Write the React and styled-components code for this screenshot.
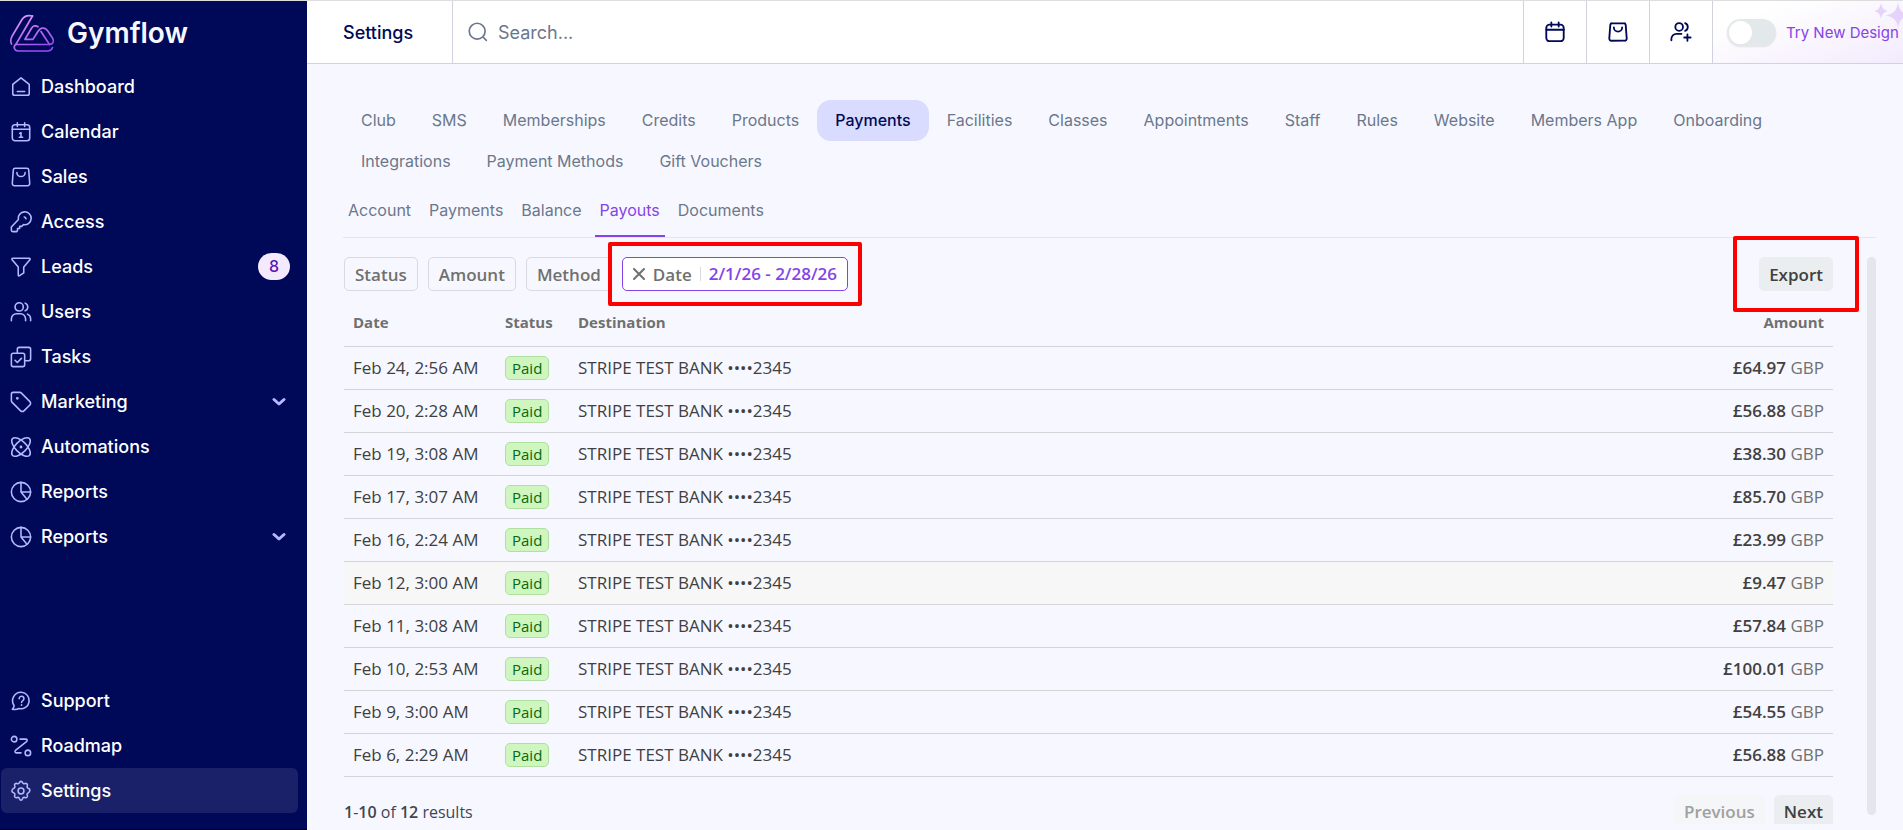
import React from 'react'
import styled, {createGlobalStyle, css} from 'styled-components'

const navItems = [
  {label: 'Dashboard', icon: 'home'},
  {label: 'Calendar', icon: 'calendarDay'},
  {label: 'Sales', icon: 'bag'},
  {label: 'Access', icon: 'key'},
  {label: 'Leads', icon: 'funnel', count: 8},
  {label: 'Users', icon: 'users'},
  {label: 'Tasks', icon: 'tasks'},
  {label: 'Marketing', icon: 'tag', expandable: true},
  {label: 'Automations', icon: 'atom'},
  {label: 'Reports', icon: 'pie'},
  {label: 'Reports', icon: 'pie', expandable: true},
]

const footerItems = [
  {label: 'Support', icon: 'help'},
  {label: 'Roadmap', icon: 'route'},
  {label: 'Settings', icon: 'gear', active: true},
]

const tabs = [
  'Club', 'SMS', 'Memberships', 'Credits', 'Products', 'Payments', 'Facilities', 'Classes', 'Appointments',
  'Staff', 'Rules', 'Website', 'Members App', 'Onboarding', 'Integrations', 'Payment Methods', 'Gift Vouchers',
]

const subTabs = ['Account', 'Payments', 'Balance', 'Payouts', 'Documents']

const payouts = [
  {date: 'Feb 24, 2:56 AM', amount: '£64.97'},
  {date: 'Feb 20, 2:28 AM', amount: '£56.88'},
  {date: 'Feb 19, 3:08 AM', amount: '£38.30'},
  {date: 'Feb 17, 3:07 AM', amount: '£85.70'},
  {date: 'Feb 16, 2:24 AM', amount: '£23.99'},
  {date: 'Feb 12, 3:00 AM', amount: '£9.47', hovered: true},
  {date: 'Feb 11, 3:08 AM', amount: '£57.84'},
  {date: 'Feb 10, 2:53 AM', amount: '£100.01'},
  {date: 'Feb 9, 3:00 AM', amount: '£54.55'},
  {date: 'Feb 6, 2:29 AM', amount: '£56.88'},
]

const icons = {
  home: <><path d="M3 9.2 12 2l9 7.2V19a2 2 0 0 1-2 2H5a2 2 0 0 1-2-2z"/><path d="M8 17h8"/></>,
  calendarDay: <><rect x="2.5" y="4" width="19" height="17.5" rx="3"/><path d="M2.5 9h19M8 2v4M16 2v4M10.5 13.5 12 12.7v5M10.2 17.8h3.6"/></>,
  calendar: <><rect x="2.5" y="4" width="19" height="18" rx="3.5"/><path d="M2.5 9.5h19M8 1.5V6M16 1.5V6"/></>,
  bag: <><path d="M5.6 2.5h12.8a2 2 0 0 1 2 1.8L21.5 19a2.3 2.3 0 0 1-2.3 2.5H4.8A2.3 2.3 0 0 1 2.5 19L3.6 4.3a2 2 0 0 1 2-1.8z"/><path d="M7.5 7a4.5 4.5 0 0 0 9 0"/></>,
  key: <><path d="M9.2 9.2a7 7 0 1 1 5.6 5.6l-2 2h-2.3v2.3H8.200v2.300l-1 1.100H3a1.500 1.500 0 0 1-1.500-1.500v-3.500z"/><path d="M15.500 6.500a2.500 2.500 0 0 1 2 2"/></>,
  funnel: <path d="M3 2.500h18c.9 0 1.200 1 .7 1.700L15 12v6.500l-4.500 3c-.8.500-1.500 0-1.500-.8V12L2.300 4.200C1.800 3.500 2.100 2.500 3 2.500z"/>,
  users: <><circle cx="10" cy="6.500" r="4.500"/><path d="M1.500 21.500v-2a5.500 5.500 0 0 1 5.500-5.500h4.500a5.500 5.500 0 0 1 5.500 5.500v2M16.500 2.300a4.500 4.500 0 0 1 0 8.400M19 14.300a5.500 5.500 0 0 1 3.500 5.200v2"/></>,
  userPlus: <><circle cx="10" cy="6.500" r="4.200"/><path d="M1.500 21v-1.500A5.500 5.500 0 0 1 7 14h5.500M16.500 2.300a4.500 4.500 0 0 1 0 8.400M19 14.500v7M15.500 18h7"/></>,
  tasks: <><rect x="1.500" y="8" width="14.500" height="14.500" rx="2"/><path d="M8 8V3.500a2 2 0 0 1 2-2h10.500a2 2 0 0 1 2 2V14a2 2 0 0 1-2 2H16M5.500 15.500l2.500 2.500 4.500-4.500"/></>,
  tag: <><path d="M1.500 3.500v7.200c0 .6.200 1 .6 1.400l9.500 9.600a2.500 2.500 0 0 0 3.600 0l6.500-6.500a2.500 2.500 0 0 0 0-3.600L12.200 2.100a2 2 0 0 0-1.400-.6H3.500a2 2 0 0 0-2 2z"/><circle cx="8" cy="8" r=".7"/></>,
  atom: <><ellipse cx="12" cy="12" rx="13" ry="6" transform="rotate(45 12 12)"/><ellipse cx="12" cy="12" rx="13" ry="6" transform="rotate(-45 12 12)"/><circle cx="12" cy="12" r=".7"/></>,
  pie: <><circle cx="12" cy="12" r="10.500"/><path d="M12 1.500V12h10.500M12 12l6.500 8"/></>,
  help: <><path d="M12.500 2.500a9 9 0 1 1-2.800 17.700C7.500 21.500 5 21.500 2.500 21c1-1 1.800-2.500 2-4A9.200 9.200 0 0 1 12.500 2.500z"/><path d="M10 9.500a2.600 2.600 0 1 1 4 2.100c-.9.600-1.400 1-1.400 1.900M12.600 16v.5"/></>,
  route: <><circle cx="4.500" cy="4.500" r="3"/><circle cx="19.500" cy="19.500" r="3"/><path d="M11 4.500h6c1.800 0 2.300 1.700 1 2.800L6.300 16.500c-1.500 1.200-1 3 .7 3h5"/></>,
  gear: <><path d="M12 1.500c1 0 1.500.6 1.800 1.400.3 1 1.300 1.400 2.300 1 .8-.4 1.700-.3 2.400.3.600.7.700 1.600.3 2.400-.4 1 0 2 1 2.300.8.300 1.900.8 1.900 2.100s-1.100 2.800-1.900 3.100c-1 .3-1.400 1.300-1 2.300.4.800.3 1.700-.3 2.400-.7.600-1.600.7-2.400.3-1-.4-2 0-2.300 1-.3.800-.8 1.900-1.800 1.900s-1.500-1.100-1.800-1.900c-.3-1-1.300-1.400-2.300-1-.8.400-1.700.3-2.400-.3-.6-.7-.7-1.600-.3-2.400.4-1 0-2-1-2.300-.8-.3-2.200-1.100-2.200-2.100s1.400-2.800 2.200-3.100c1-.3 1.400-1.300 1-2.300-.4-.8-.3-1.700.3-2.400.7-.6 1.600-.7 2.400-.3 1 .4 2 0 2.300-1 .3-.8.800-1.400 1.800-1.400z"/><circle cx="12" cy="12" r="3.200"/></>,
  search: <><circle cx="11" cy="11" r="9.500"/><path d="m18 18 4 4"/></>,
}

const Icon = ({name, size = 22, weight = 1.7}) => (
  <Svg width={size} height={size} viewBox="0 0 24 24" strokeWidth={weight} aria-hidden="true">{icons[name]}</Svg>
)

const Logo = () => (
  <Svg width="46" height="40" viewBox="0 0 46 40" stroke="url(#logoFill)" strokeWidth="1.7" aria-hidden="true">
    <defs>
      <linearGradient id="logoFill" gradientUnits="userSpaceOnUse" x1="12" y1="0" x2="28" y2="36">
        <stop offset="0" stopColor="#e59af8"/>
        <stop offset="1" stopColor="#9a4df2"/>
      </linearGradient>
    </defs>
    <path d="M2.500 31C1.300 28.500 1.500 26 3 23.300L13 6.500C15.500 2.500 18.500 1.800 23.500 3"/>
    <path d="M23.500 3 6.800 31.500H40c4 0 5.500-3 3.500-6.500L38.800 18c-2.800-4-7-4-9.500 0L24 26.300h-8l6.500-11c1.500-2.800 4.500-3 6.500-1.500"/>
    <path d="m32 18.500 8.500 13"/>
    <path d="M6.800 31.500c-3 2-1.500 6.500 2.500 6.500H38c3 0 4.800-1.200 5.500-3.500"/>
  </Svg>
)

const NavEntry = ({label, icon, count, expandable, active}) => (
  <NavLink href="#" $active={active}>
    <Icon name={icon}/>
    <span>{label}</span>
    {count && <Count>{count}</Count>}
    {expandable && (
      <Chevron width="14" height="10" viewBox="0 0 14 10" strokeWidth="3" aria-hidden="true"><path d="m2 2.500 5 4.500 5-4.500"/></Chevron>
    )}
  </NavLink>
)

const App = () => (
  <Page>
    <GlobalStyle/>
    <Sidebar>
      <Brand href="#"><Logo/>Gymflow</Brand>
      {navItems.map((item, i) => <NavEntry key={i} {...item}/>)}
      <Spacer/>
      {footerItems.map(item => <NavEntry key={item.label} {...item}/>)}
    </Sidebar>
    <Main>
      <Header>
        <Title>Settings</Title>
        <Search>
          <Icon name="search" size={20} weight={2}/>
          <SearchInput type="text" placeholder="Search..." aria-label="Search"/>
        </Search>
        <HeaderButton aria-label="Calendar"><Icon name="calendar" weight={2}/></HeaderButton>
        <HeaderButton aria-label="Sales"><Icon name="bag" weight={2}/></HeaderButton>
        <HeaderButton aria-label="Add user"><Icon name="userPlus" weight={2}/></HeaderButton>
        <DesignSwitch>
          <Switch type="checkbox" role="switch"/>
          Try New Design
          <Sparkles width="32" height="28" viewBox="0 0 32 28" aria-hidden="true">
            <path d="M10 2q1 7 7 8-6 1-7 8-1-7-7-8 6-1 7-8zM27 1q1 12 13 13.500Q28 16 27 27q-1-11-13-12.500Q26 13 27 1z"/>
          </Sparkles>
        </DesignSwitch>
      </Header>
      <Content>
        <Tabs>
          {tabs.map(tab => <Tab key={tab} href="#" $active={tab === 'Payments'}>{tab}</Tab>)}
        </Tabs>
        <SubTabs>
          {subTabs.map(tab => <SubTab key={tab} href="#" $active={tab === 'Payouts'}>{tab}</SubTab>)}
        </SubTabs>
        <Scroller>
          <Panel>
            <Toolbar>
              <Filter>Status</Filter>
              <Filter>Amount</Filter>
              <Filter>Method</Filter>
              <Marked>
                <Filter $applied>
                  <Svg width="12" height="12" viewBox="0 0 12 12" strokeWidth="2" aria-hidden="true"><path d="m1 1 10 10M11 1 1 11"/></Svg>
                  Date
                  <FilterValue>2/1/26 - 2/28/26</FilterValue>
                </Filter>
                <Highlight $x={14} $y={15}/>
              </Marked>
              <Spacer/>
              <Marked>
                <Button>Export</Button>
                <Highlight $x={26} $y={21}/>
              </Marked>
            </Toolbar>
            <Table>
              <thead>
                <tr>
                  <Th $width={152}>Date</Th>
                  <Th $width={73}>Status</Th>
                  <Th>Destination</Th>
                  <Th $right>Amount</Th>
                </tr>
              </thead>
              <tbody>
                {payouts.map(({date, amount, hovered}) => (
                  <Row key={date} $hovered={hovered}>
                    <Td>{date}</Td>
                    <Td><Badge>Paid</Badge></Td>
                    <Td>STRIPE TEST BANK ••••2345</Td>
                    <Td $right><Amount>{amount}</Amount> GBP</Td>
                  </Row>
                ))}
              </tbody>
            </Table>
            <Pager>
              <Results><b>1</b>-<b>10</b> of <b>12</b> results</Results>
              <Button disabled>Previous</Button>
              <Button>Next</Button>
            </Pager>
          </Panel>
          <Scrollbar/>
        </Scroller>
      </Content>
    </Main>
  </Page>
)

export default App

const uiFont = 'Inter, "Liberation Sans", sans-serif'
const tableFont = '"Open Sans", "Noto Sans", sans-serif'

const GlobalStyle = createGlobalStyle`
  * {
    box-sizing: border-box;
  }

  body {
    margin: 0;
    background: #f7f8ff;
    font-family: ${uiFont};
  }

  a {
    color: inherit;
    text-decoration: none;
  }

  button, input {
    font: inherit;
  }
`

const Page = styled.div`
  display: flex;
  height: 100vh;
  overflow: hidden;
  border-top: 1px solid #dddddd;
`

const Svg = styled.svg`
  flex: none;
  fill: none;
  stroke: ${({stroke}) => stroke || 'currentColor'};
  stroke-linecap: round;
  stroke-linejoin: round;
`

const Sidebar = styled.nav`
  display: flex;
  flex-direction: column;
  flex: none;
  width: 307px;
  padding: 0 9px 16px 1px;
  border-bottom: 1px solid #000;
  background: #000957;
`

const Brand = styled.a`
  display: flex;
  align-items: center;
  gap: 12px;
  height: 63px;
  padding-left: 8px;
  color: #f7f8ff;
  font-size: 28px;
  font-weight: 600;
`

const NavLink = styled.a`
  display: flex;
  align-items: center;
  gap: 9px;
  height: 45px;
  padding: 0 8px 0 9px;
  border-radius: 6px;
  background: ${({$active}) => $active ? '#1a2168' : 'transparent'};
  color: #fff;
  font-size: 18px;
  font-weight: 500;

  ${Svg} {
    color: #b4b9ff;
  }
`

const Count = styled.span`
  margin-left: auto;
  padding: 0 11px;
  border-radius: 14px;
  background: #f3ebfd;
  color: #5b16b5;
  font-size: 16px;
  line-height: 27px;
`

const Chevron = styled(Svg)`
  margin: 0 4px 0 auto;
`

const Spacer = styled.div`
  flex: 1;
`

const Main = styled.main`
  display: flex;
  flex-direction: column;
  flex: 1;
  min-width: 0;
`

const Header = styled.header`
  display: flex;
  flex: none;
  height: 63px;
  border-bottom: 1px solid #d0d2e0;
  background: #fff;
  color: #000957;
`

const Title = styled.h1`
  display: flex;
  align-items: center;
  width: 146px;
  margin: 0;
  padding-left: 36px;
  border-right: 1px solid #d0d2e0;
  font-size: 18px;
  font-weight: 500;
`

const Search = styled.label`
  display: flex;
  align-items: center;
  flex: 1;
  gap: 10px;
  padding-left: 15px;
  color: #6b778c;
`

const SearchInput = styled.input`
  flex: 1;
  padding: 0;
  border: 0;
  outline: 0;
  font-size: 18px;

  &::placeholder {
    color: #6b778c;
  }
`

const HeaderButton = styled.button`
  display: flex;
  align-items: center;
  justify-content: center;
  width: 63px;
  border: 0;
  border-left: 1px solid #d0d2e0;
  background: none;
  color: #000957;
`

const DesignSwitch = styled.label`
  position: relative;
  display: flex;
  align-items: center;
  gap: 10px;
  width: 191px;
  padding-left: 14px;
  border-left: 1px solid #d0d2e0;
  background: linear-gradient(160deg, #fff 20%, #f3ebfd);
  color: #8544e8;
  font-size: 15px;
  white-space: nowrap;
`

const Switch = styled.input`
  appearance: none;
  width: 49px;
  height: 27px;
  margin: 0;
  padding: 2px;
  border-radius: 14px;
  background: #e3e8eb;
  box-shadow: 0 1px 2px #0000001a;

  &::before {
    content: '';
    display: block;
    width: 23px;
    height: 23px;
    border-radius: 50%;
    background: #fff;
  }
`

const Sparkles = styled.svg`
  position: absolute;
  top: 0;
  right: 0;
  fill: #e6d3fb;
`

const Content = styled.div`
  display: flex;
  flex-direction: column;
  flex: 1;
  min-height: 0;
  padding: 36px 27px 6px 36px;
`

const Tabs = styled.nav`
  display: flex;
  flex-wrap: wrap;
`

const Tab = styled.a`
  padding: 0 18px;
  border-radius: 14px;
  color: #6b778c;
  font-size: 16px;
  line-height: 41px;

  ${({$active}) => $active && css`
    background: #d9dbff;
    color: #000957;
    font-weight: 500;
  `}
`

const SubTabs = styled.nav`
  display: flex;
  gap: 8px;
  margin-top: 8px;
  border-bottom: 1px solid #e3e6ee;
`

const SubTab = styled.a`
  padding: 0 5px 4px;
  border-bottom: 2px solid ${({$active}) => $active ? '#8544e8' : 'transparent'};
  color: ${({$active}) => $active ? '#8544e8' : '#6b778c'};
  font-size: 16px;
  line-height: 41px;
`

/* starts over the tab line so the highlight frame is not clipped */
const Scroller = styled.div`
  display: flex;
  flex: 1;
  gap: 34px;
  min-height: 0;
  overflow: hidden;
  margin-top: -2px;
  padding: 21px 0 0 1px;
`

const Panel = styled.div`
  flex: 1;
  color: #414552;
  font-family: ${tableFont};
  font-size: 17px;
`

const Toolbar = styled.div`
  display: flex;
  gap: 10px;
`

const Marked = styled.div`
  position: relative;
`

/* Frame drawn around a control to point it out */
const Highlight = styled.span`
  position: absolute;
  inset: ${({$x, $y}) => `-${$y}px -${$x}px`};
  border: 4px solid #f00;
  border-radius: 2px;
  pointer-events: none;
`

const Filter = styled.button`
  display: flex;
  align-items: center;
  gap: 8px;
  height: 34px;
  padding: 0 10px;
  border: 1px solid ${({$applied}) => $applied ? '#8544e8' : '#d8dade'};
  border-radius: 5px;
  background: ${({$applied}) => $applied ? '#fff' : 'transparent'};
  color: #707070;
  font-weight: 600;
`

const FilterValue = styled.span`
  padding-left: 8px;
  border-left: 1px solid #d8dade;
  color: #8544e8;
  line-height: 14px;
`

const Button = styled.button`
  height: 34px;
  padding: 0 10px;
  border: 0;
  border-radius: 5px;
  background: #ebeef1;
  color: #404040;
  font-weight: 600;

  &:disabled {
    background: #f5f6f8;
    color: #a0a0a0;
  }
`

const Table = styled.table`
  width: 100%;
  border-collapse: collapse;
`

const cell = css`
  padding: 0 9px;
  border-bottom: 1px solid #d5d5d8;
  text-align: ${({$right}) => $right ? 'right' : 'left'};
`

const Th = styled.th`
  ${cell}
  height: 55px;
  width: ${({$width}) => $width ? `${$width}px` : 'auto'};
  padding-top: 8px;
  color: #707070;
  font-size: 15px;
  font-weight: 700;
`

const Td = styled.td`
  ${cell}
  height: 43px;
  color: ${({$right}) => $right ? '#707070' : '#404040'};
`

const Row = styled.tr`
  background: ${({$hovered}) => $hovered ? '#f7f7f7' : 'transparent'};
`

const Badge = styled.span`
  display: inline-block;
  padding: 0 6px;
  border: 1px solid #b0e09f;
  border-radius: 5px;
  background: #cff6be;
  color: #05690d;
  font-size: 15px;
  line-height: 22px;
`

const Amount = styled.span`
  color: #404040;
  font-weight: 600;
`

const Pager = styled.div`
  display: flex;
  align-items: center;
  gap: 9px;
  padding-top: 18px;
`

const Results = styled.span`
  flex: 1;
  font-size: 16px;

  b {
    font-weight: 600;
  }
`

const Scrollbar = styled.div`
  width: 9px;
  margin-bottom: 9px;
  border-radius: 5px;
  background: #e3e7ec;
`
